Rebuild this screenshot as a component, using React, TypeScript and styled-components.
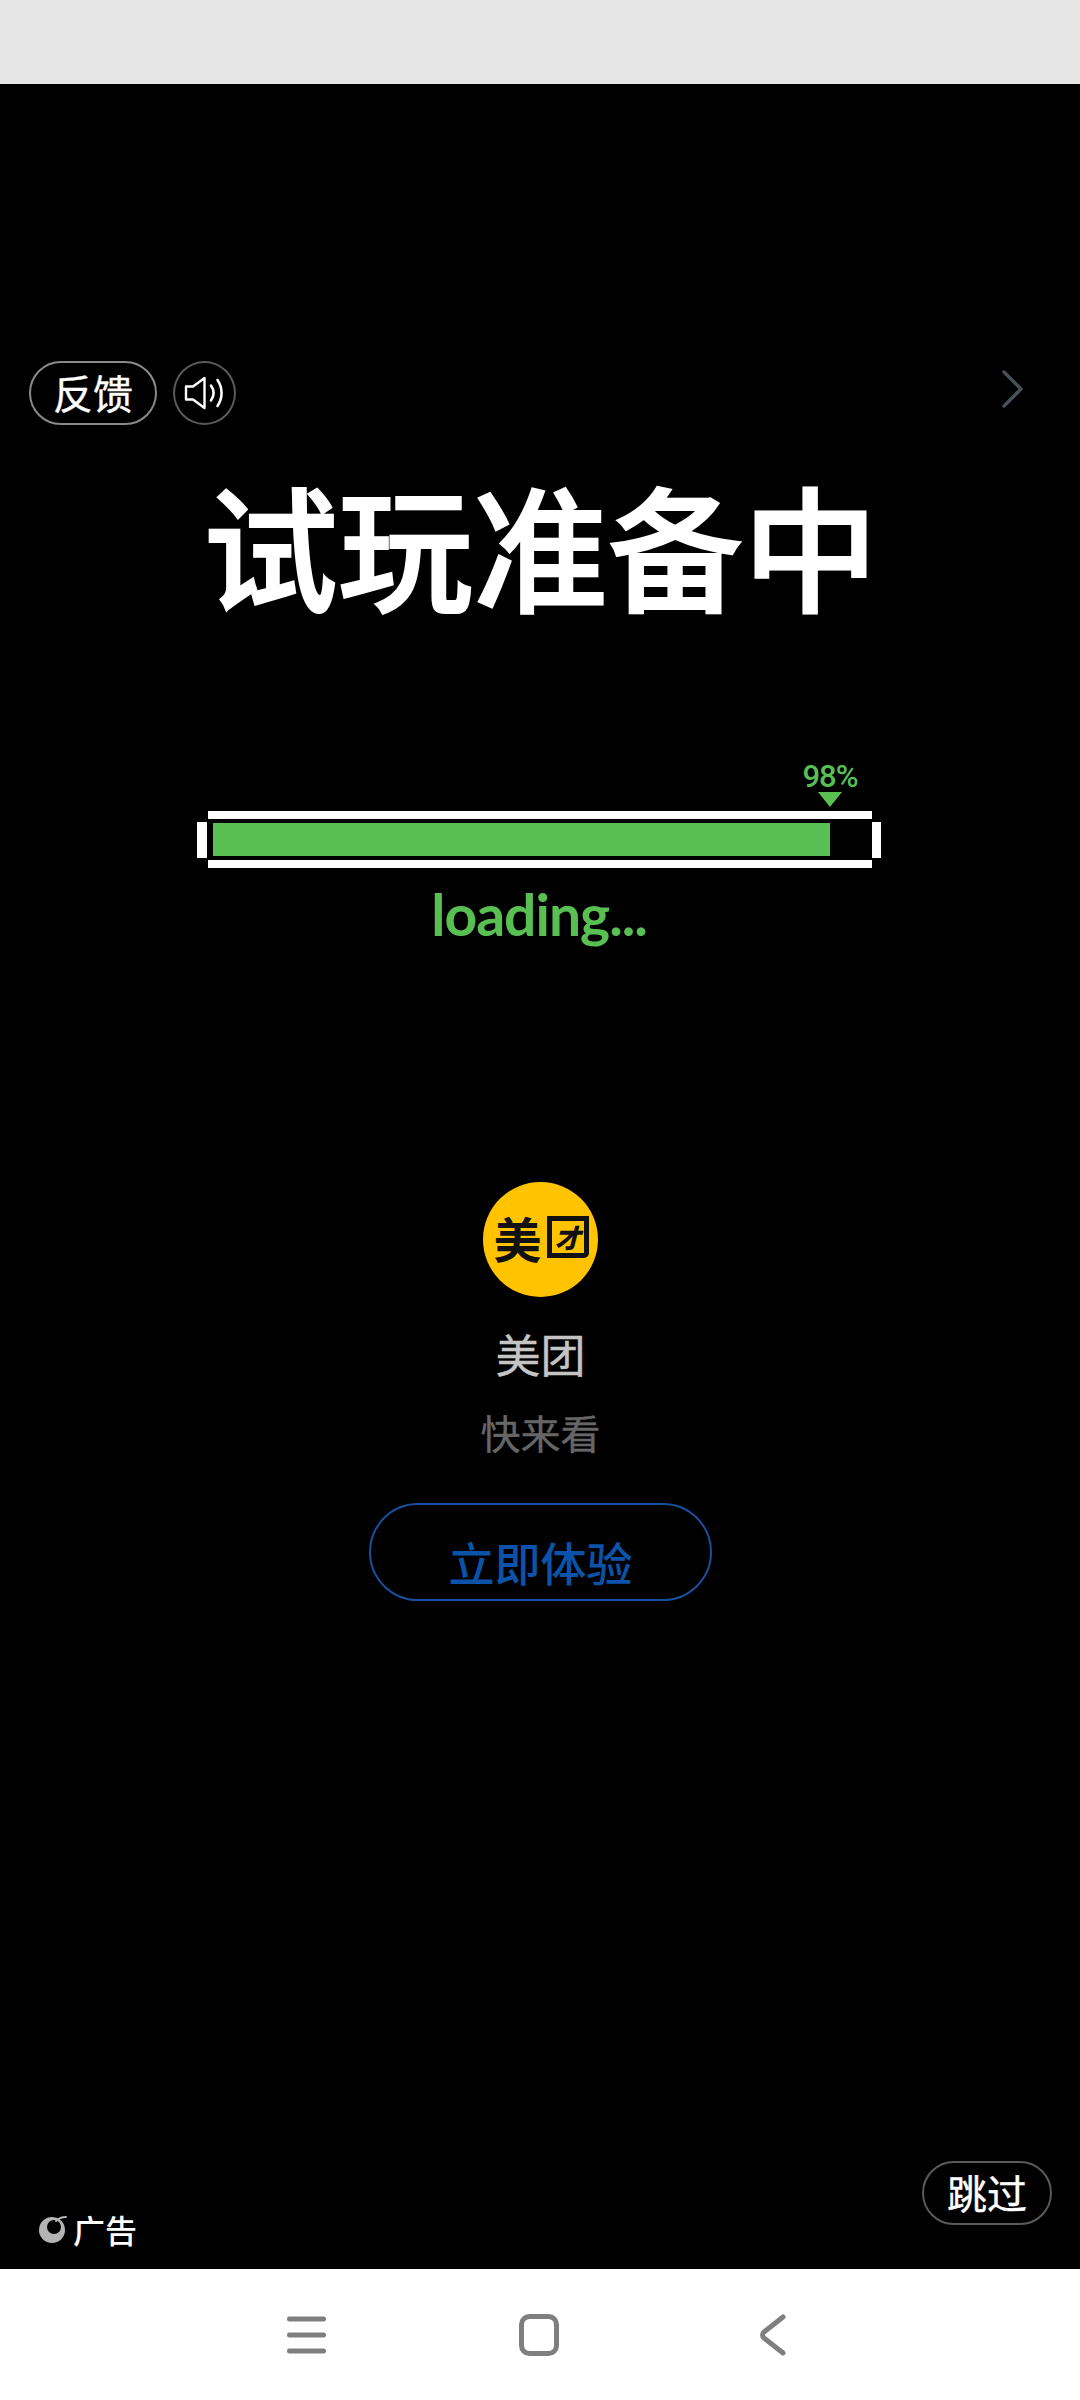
import React from 'react';
import styled, { createGlobalStyle } from 'styled-components';

const CJK = `"Noto Sans CJK SC", "Liberation Sans", sans-serif`;
const GREEN = '#59bf53';

const GlobalStyle = createGlobalStyle`
  html, body {
    margin: 0;
    padding: 0;
    background: #000;
    font-family: ${CJK};
  }
`;

const Screen = styled.div`
  width: 1080px;
  height: 2400px;
  display: flex;
  flex-direction: column;
  overflow: hidden;
`;

const StatusBar = styled.div`
  height: 84px;
  flex: none;
  background: #e6e6e6;
`;

const Stage = styled.main`
  flex: 1;
  display: flex;
  flex-direction: column;
  background: #000;
  padding: 277px 28px 44px 29px;
`;

const TopRow = styled.div`
  display: flex;
  align-items: center;
  gap: 16px;
  height: 64px;
`;

const PillButton = styled.div`
  width: ${p => p.$width}px;
  height: 64px;
  box-sizing: border-box;
  border: 2px solid ${p => p.$border};
  border-radius: 32px;
  display: flex;
  align-items: center;
  justify-content: center;
  color: #fff;
  font-size: 40px;
  line-height: 1;
  font-weight: 400;
  padding-bottom: 2px;
  -webkit-text-stroke: 0.4px #fff;
`;

const RoundButton = styled.div`
  width: 63px;
  height: 64px;
  box-sizing: border-box;
  border: 2px solid #5a5a5a;
  border-radius: 50%;
  display: flex;
  align-items: center;
  justify-content: center;
`;

const Chevron = styled.svg`
  margin-left: auto;
  margin-right: 28px;
  margin-top: -9px;
`;

const Title = styled.h1`
  margin: 48px 0 0;
  text-align: center;
  color: #fff;
  font-size: 135px;
  line-height: 140px;
  font-weight: 500;
  letter-spacing: 0;
  -webkit-text-stroke: 2px #fff;
`;

const Progress = styled.section`
  width: 684px;
  margin: 149px 0 0 168px;
  display: flex;
  flex-direction: column;
`;

const Marker = styled.div`
  align-self: flex-end;
  width: 54px;
  margin-right: 24px;
  display: flex;
  flex-direction: column;
  align-items: center;
`;

const Percent = styled.div`
  color: ${GREEN};
  font-family: "Roboto", sans-serif;
  font-size: 31px;
  line-height: 30px;
  font-weight: 500;
  letter-spacing: -1px;
  white-space: nowrap;
`;

const Pointer = styled.div`
  width: 0;
  height: 0;
  border-left: 12px solid transparent;
  border-right: 12px solid transparent;
  border-top: 15px solid ${GREEN};
`;

const BarRow = styled.div`
  margin-top: 4px;
  display: flex;
  align-items: center;
`;

const Cap = styled.div`
  width: ${p => p.$width}px;
  height: 36px;
  flex: none;
  background: #fff;
`;

const Track = styled.div`
  flex: 1;
  height: 57px;
  margin: 0 0 0 1px;
  box-sizing: border-box;
  border-top: 8px solid #fff;
  border-bottom: 8px solid #fff;
  padding: 4px 0 4px 5px;
`;

const Fill = styled.div`
  height: 100%;
  background: ${GREEN};
`;

const Loading = styled.div`
  margin-top: 18px;
  text-align: center;
  color: ${GREEN};
  font-family: "Lato", sans-serif;
  font-size: 57px;
  line-height: 56px;
  font-weight: 700;
  letter-spacing: -1px;
`;

const AppBlock = styled.section`
  margin-top: 240px;
  display: flex;
  flex-direction: column;
  align-items: center;
`;

const Logo = styled.div`
  width: 115px;
  height: 115px;
  border-radius: 50%;
  background: #ffc300;
  display: flex;
  align-items: center;
  justify-content: center;
  gap: 5px;
  color: #111;
  padding-left: 1px;
  box-sizing: border-box;
`;

const LogoChar = styled.span`
  font-size: 48px;
  line-height: 48px;
  font-weight: 700;
  margin-top: -6px;
`;

const LogoBox = styled.span`
  width: 42px;
  height: 42px;
  margin-top: -6px;
  box-sizing: border-box;
  border: 5px solid #111;
  border-radius: 0 0 5px 0;
  display: flex;
  align-items: center;
  justify-content: center;
  font-size: 26px;
  line-height: 26px;
  font-weight: 900;
  font-style: italic;
`;

const AppName = styled.div`
  margin-top: 30px;
  color: #c4c4c4;
  font-size: 45px;
  line-height: 54px;
  font-weight: 400;
  -webkit-text-stroke: 0.4px #c4c4c4;
`;

const Slogan = styled.div`
  margin-top: 26px;
  color: #666;
  font-size: 40px;
  line-height: 50px;
  font-weight: 400;
  -webkit-text-stroke: 0.4px #666;
`;

const CtaButton = styled.div`
  margin-top: 46px;
  width: 343px;
  height: 98px;
  box-sizing: border-box;
  border: 2px solid #17509c;
  border-radius: 49px;
  display: flex;
  justify-content: center;
  padding-top: 24px;
  color: #0b53a8;
  font-size: 46px;
  line-height: 64px;
  font-weight: 500;
`;

const Footer = styled.div`
  margin-top: auto;
  display: flex;
  align-items: flex-end;
  justify-content: space-between;
`;

const AdTag = styled.div`
  display: flex;
  align-items: center;
  gap: 6px;
  margin-left: 10px;
  margin-bottom: -24px;
  color: #fff;
  font-size: 32px;
  line-height: 40px;
  font-weight: 500;
`;

const NavBar = styled.nav`
  height: 131px;
  flex: none;
  background: #fff;
  display: flex;
  align-items: center;
  padding: 0 0 0 287px;
`;

const NavIcon = styled.svg`
  flex: none;
  margin-right: ${p => p.$gap}px;
`;

export default function App() {
  const percent = 98;

  return (
    <Screen>
      <GlobalStyle />
      <StatusBar />
      <Stage>
        <TopRow>
          <PillButton $width={128} $border="#8a8a8a">反馈</PillButton>
          <RoundButton>
            <svg width="44" height="36" viewBox="0 0 44 36" fill="none" stroke="#fff" strokeLinecap="round" strokeLinejoin="round">
              <path d="M3 11.5h7L21.5 3v30L10 24.5H3z" strokeWidth="2.4" />
              <path d="M28 10.5c3.2 4.6 3.2 10.4 0 15" strokeWidth="2.6" />
              <path d="M34.5 5c5.4 8 5.4 18 0 26" strokeWidth="2.6" />
            </svg>
          </RoundButton>
          <Chevron width="22" height="38" viewBox="0 0 22 38" fill="none" stroke="#465058" strokeWidth="3.4" strokeLinecap="round" strokeLinejoin="round">
            <path d="M2 2l17 17L2 36" />
          </Chevron>
        </TopRow>

        <Title>试玩准备中</Title>

        <Progress>
          <Marker>
            <Percent>{percent}%</Percent>
            <Pointer />
          </Marker>
          <BarRow>
            <Cap $width={10} />
            <Track>
              <Fill style={{ width: `${percent * 6.3}px` }} />
            </Track>
            <Cap $width={9} />
          </BarRow>
          <Loading>loading...</Loading>
        </Progress>

        <AppBlock>
          <Logo>
            <LogoChar>美</LogoChar>
            <LogoBox>才</LogoBox>
          </Logo>
          <AppName>美团</AppName>
          <Slogan>快来看</Slogan>
          <CtaButton>立即体验</CtaButton>
        </AppBlock>

        <Footer>
          <AdTag>
            <svg width="28" height="30" viewBox="0 0 28 30">
              <circle cx="13" cy="16" r="13" fill="#b4b4b4" />
              <circle cx="15" cy="13" r="7" fill="#000" />
              <path d="M17 7c3-3 6-4 10-4" fill="none" stroke="#b4b4b4" strokeWidth="2" strokeLinecap="round" />
            </svg>
            广告
          </AdTag>
          <PillButton $width={130} $border="#5a5a5a">跳过</PillButton>
        </Footer>
      </Stage>
      <NavBar>
        <NavIcon $gap={193} width="39" height="42" viewBox="0 0 39 42" fill="none" stroke="#7f7f7f" strokeWidth="5" strokeLinecap="round">
          <path d="M2.5 5h34M2.5 21h34M2.5 37h34" />
        </NavIcon>
        <NavIcon $gap={201} width="40" height="42" viewBox="0 0 40 42" fill="none" stroke="#7f7f7f" strokeWidth="5">
          <rect x="2.5" y="2.5" width="35" height="37" rx="8" />
        </NavIcon>
        <NavIcon $gap={0} width="26" height="42" viewBox="0 0 26 42" fill="none" stroke="#7f7f7f" strokeWidth="5" strokeLinecap="round" strokeLinejoin="round">
          <path d="M23 3L4 18c-2 1.6-2 4.4 0 6l19 15" />
        </NavIcon>
      </NavBar>
    </Screen>
  );
}
